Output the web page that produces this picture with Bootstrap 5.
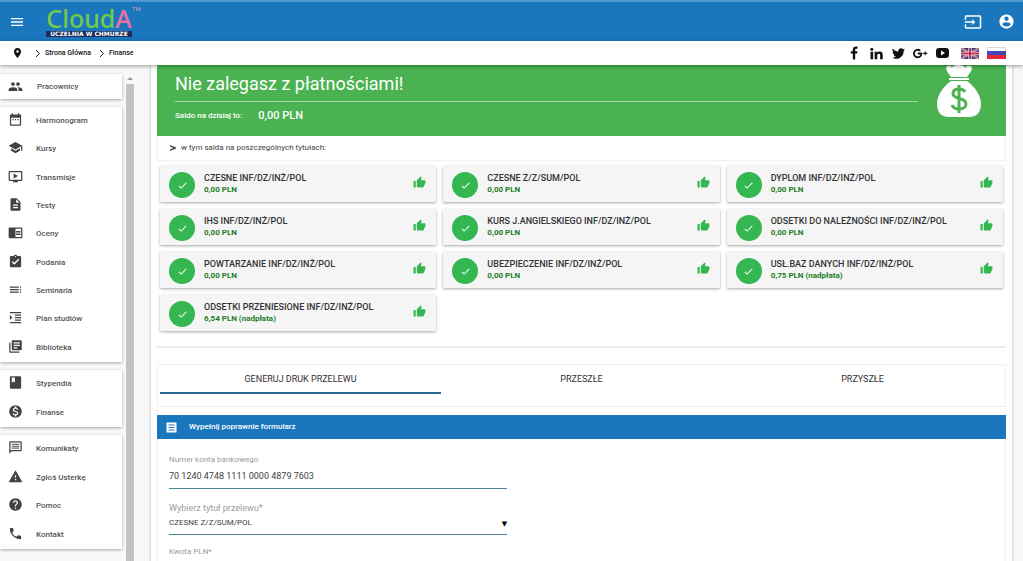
<!DOCTYPE html>
<html lang="pl">
<head>
<meta charset="utf-8">
<meta name="viewport" content="width=device-width, initial-scale=1">
<title>CloudA – Finanse</title>
<link href="https://cdn.jsdelivr.net/npm/bootstrap@5.3.0/dist/css/bootstrap.min.css" rel="stylesheet">
<style>
  :root { --brand: #1a77bd; --ok: #34b750; --banner: #4ab251; --ink: #424242; }
  body { font-family: Roboto, "Liberation Sans", sans-serif; font-size: 8px; line-height: 12px; color: var(--ink); background: #f8f8f9; }
  a { color: inherit; text-decoration: none; }
  svg { display: block; fill: currentColor; flex: none; }
  .shell { height: 100vh; overflow: hidden; }
  .topbar { background: var(--brand); border-top: 2px solid #4f9ad2; height: 41px; padding: 0 8px 0 9px; color: #fff; }
  .plain-btn { background: none; border: 0; padding: 0; color: inherit; }
  .logo { width: 86px; margin-left: 21px; }
  .logo-name { font: 500 25px/25px "Noto Sans", sans-serif; color: #72c94c; }
  .logo-name b { font-weight: 500; color: #ee6fa5; }
  .logo-tm { font-size: 6px; line-height: 6px; color: #d59bc8; top: 0; left: 86px; }
  .logo-tag { font: bold 6px/6px "DejaVu Sans", sans-serif; background: #1d2c5a; color: #fff; }
  .subbar { background: #fff; height: 24px; padding: 0 17px 0 12px; box-shadow: 0 1px 4px rgba(0,0,0,.4); z-index: 2; color: #111; }
  .crumbs { font-size: 7px; font-weight: 500; }
  .side { width: 122px; padding-top: 9px; gap: 8px; }
  .sheet { background: #fff; box-shadow: 0 1px 3px rgba(0,0,0,.32); }
  .menu { list-style: none; margin: 0; padding: 0; font-weight: 500; }
  .menu li { flex: 1 1 0; display: flex; }
  .menu a { display: flex; align-items: center; flex: 1; padding-left: 8px; gap: 13px; color: #555; }
  .menu svg { width: 15px; height: 15px; margin-bottom: 3px; color: #424242; }
  .menu-staff { min-height: 25px; } .menu-staff svg { margin-bottom: 1px; } .menu-staff a { gap: 14px; }
  .menu-study { min-height: 255px; }
  .menu-money { min-height: 57px; }
  .menu-help { min-height: 114px; }
  .track { width: 8px; margin: 12px 17px 0 4px; }
  .track-arrow { border: 3px solid transparent; border-bottom-color: #999; border-top: 0; height: 3px; width: 6px; margin: 0 1px 4px; }
  .track-thumb { background: #c4c2c5; }
  .panel { background: #fff; box-shadow: 0 0 3px rgba(0,0,0,.28); margin-right: 11px; padding: 0 6px; }
  .banner { background: var(--banner); color: #fff; height: 71px; padding: 0 24px 0 18px; gap: 18px; }
  .banner h1 { font-size: 18px; line-height: 24px; font-weight: 400; margin: 7px 0 5px; }
  .banner-rule { border-top: 1px solid #a4d8a8; padding-top: 8px; font-weight: 500; }
  .banner-sum { font-size: 11px; }
  .details { border: 1px solid #f1f1f1; border-top: 0; height: 25px; padding-left: 12px; gap: 5px; }
  .balances { display: grid; grid-template-columns: repeat(3, 1fr); gap: 7px; margin: 5px 3px 15px; }
  .balance { background: #f5f5f5; box-shadow: 0 1px 3px rgba(0,0,0,.35); height: 36px; padding: 0 10px 0 9px; gap: 9px; border-radius: 1px; }
  .tick { width: 26px; height: 26px; border-radius: 50%; background: var(--ok); color: #fff; margin-top: 2px; }
  .balance h2 { font-size: 9px; line-height: 12px; font-weight: 500; margin: 0; color: #333; }
  .balance p { font-size: 8px; line-height: 12px; font-weight: 700; margin: 0; color: #1b7d28; }
  .thumb { color: var(--ok); margin-bottom: 4px; }
  .divider { height: 2px; background: #ececec; }
  .tabs-sheet { margin-top: 16px; border: 1px solid #f1f1f1; border-width: 1px 1px 0; flex: 1; }
  .tabbar { padding: 0 2px; border-bottom: 1px solid #ececec; height: 42px; }
  .tabbar button { flex: 1 1 0; height: 29px; border-bottom: 2px solid transparent; font-size: 9px; color: #333; }
  .tabbar button.active { border-color: #286a94; }
  .form-title { background: var(--brand); color: #fff; font-size: 8px; font-weight: 500; height: 24px; margin: 8px -1px 0; padding-left: 9px; gap: 12px; line-height: 12px; }
  .pay-form { padding: 15px 11px 0; }
  .field { width: 41%; border-bottom: 1px solid #4c8196; }
  .field label, .amount label { color: #9b9b9b; display: block; font-size: 8px; }
  .field input, .field select { appearance: none; background: none; border: 0; outline: 0; padding: 0; width: 100%; color: var(--ink); display: block; height: 12px; line-height: 12px; }
  .account { height: 35px; } .account input { font-size: 9px; margin-top: 4px; }
  .title-field { height: 33px; margin-top: 13px; } .title-field label { font-size: 9px; }
  .title-field select { font-size: 8px; margin-top: 3px; }
  .title-field .caret { right: 0; bottom: 4px; font: 7px/12px "DejaVu Sans", sans-serif; color: #000; pointer-events: none; }
  .amount { margin-top: 11px; }
</style>
</head>
<body>
<svg class="d-none" aria-hidden="true">
  <symbol id="thumb" viewBox="0 0 24 24"><path d="M1 21h4V9H1v12zm22-11c0-1.100-.9-2-2-2h-6.310l.95-4.570.03-.32c0-.41-.17-.79-.44-1.060L14.170 1 7.590 7.590C7.220 7.950 7 8.450 7 9v10c0 1.100.9 2 2 2h9c.83 0 1.540-.5 1.840-1.220l3.020-7.050c.09-.23.14-.47.14-.73v-2z"/></symbol>
  <symbol id="check" viewBox="0 0 24 24"><path d="M9 16.200L4.800 12l-1.400 1.400L9 19 21 7l-1.400-1.400z"/></symbol>
  <symbol id="chev" viewBox="0 0 8 12"><path d="M1.500 1.500L6 6l-4.500 4.500" fill="none" stroke="currentColor" stroke-width="1.300"/></symbol>
</svg>
<div class="shell d-flex flex-column">
  <header class="topbar d-flex align-items-center flex-shrink-0">
    <button class="plain-btn" aria-label="Menu"><svg width="16" height="16" viewBox="0 0 24 24"><path d="M3 18h18v-2H3v2zm0-5h18v-2H3v2zm0-7v2h18V6H3z"/></svg></button>
    <a href="#" class="logo position-relative">
      <div class="logo-name text-center">Cloud<b>A</b></div>
      <span class="logo-tm position-absolute">TM</span>
      <div class="logo-tag text-center text-nowrap">UCZELNIA W CHMURZE</div>
    </a>
    <button class="plain-btn ms-auto me-3" aria-label="Wyloguj"><svg width="18" height="18" viewBox="0 0 24 24"><path d="M21 3.010H3c-1.100 0-2 .9-2 2V9h2V4.990h18v14.030H3V15H1v4.010c0 1.100.9 1.980 2 1.980h18c1.100 0 2-.88 2-1.980v-14c0-1.110-.9-2-2-2zM11 16l4-4-4-4v3H1v2h10v3z"/></svg></button>
    <button class="plain-btn" aria-label="Konto"><svg width="17" height="17" viewBox="0 0 24 24"><path d="M12 2C6.480 2 2 6.480 2 12s4.480 10 10 10 10-4.480 10-10S17.520 2 12 2zm0 3c1.660 0 3 1.340 3 3s-1.340 3-3 3-3-1.340-3-3 1.340-3 3-3zm0 14.200c-2.500 0-4.710-1.280-6-3.220.03-1.990 4-3.080 6-3.080 1.990 0 5.970 1.090 6 3.080-1.290 1.940-3.500 3.220-6 3.220z"/></svg></button>
  </header>
  <div class="subbar d-flex align-items-center position-relative flex-shrink-0">
    <svg width="11" height="10" viewBox="0 0 24 24"><path d="M12 0C7 0 3.500 3.800 3.500 8.500 3.500 15 12 24 12 24s8.500-9 8.500-15.500C20.500 3.800 17 0 12 0zm0 11.500a3 3 0 1 1 0-6 3 3 0 0 1 0 6z"/></svg>
    <nav class="crumbs d-flex align-items-center ms-2" aria-label="Ścieżka">
      <svg class="mx-1" width="6" height="9"><use href="#chev"/></svg>
      <a href="#" class="me-1">Strona Główna</a>
      <svg class="mx-1" width="6" height="9"><use href="#chev"/></svg>
      <a href="#">Finanse</a>
    </nav>
    <div class="d-flex align-items-center ms-auto gap-2">
      <a href="#" aria-label="Facebook"><svg width="14" height="14" viewBox="0 0 24 24"><path d="M10 23V13H6.500V9H10V6.200C10 2.700 12 1 15.200 1c1.400 0 2.300.1 2.800.2v3.700h-2c-1.600 0-2 .8-2 1.900V9h4l-.6 4H14v10z"/></svg></a>
      <a href="#" aria-label="LinkedIn"><svg width="15" height="15" viewBox="0 0 24 24"><circle cx="4.500" cy="5" r="2.400"/><path d="M2.400 9h4.200v12H2.400zM9 9h4v1.700c.6-1.100 2-2 4-2 4.200 0 5 2.600 5 6.200V21h-4.200v-5.500c0-1.400 0-3.100-2.100-3.100s-2.500 1.500-2.500 3V21H9z"/></svg></a>
      <a href="#" aria-label="Twitter"><svg width="13" height="13" viewBox="0 0 24 24"><path d="M23.950 4.570a10 10 0 0 1-2.820.77 4.960 4.960 0 0 0 2.160-2.720 9.900 9.900 0 0 1-3.120 1.180 4.920 4.920 0 0 0-8.380 4.480C7.690 8.100 4.070 6.130 1.640 3.160a4.920 4.920 0 0 0 1.520 6.570 4.900 4.900 0 0 1-2.230-.61v.06a4.920 4.920 0 0 0 3.950 4.830 5 5 0 0 1-2.210.08 4.940 4.940 0 0 0 4.600 3.420A9.870 9.870 0 0 1 0 19.540a13.990 13.990 0 0 0 7.550 2.210c9.050 0 14-7.500 14-13.980 0-.21 0-.42-.02-.63a9.940 9.940 0 0 0 2.420-2.570z"/></svg></a>
      <a href="#" aria-label="Google+"><svg width="15" height="11" viewBox="0 0 32 24"><path d="M10 10v4h5.800c-.5 2.400-2.700 4.200-5.800 4.200a6.200 6.200 0 1 1 4-10.900l3-2.900A10.300 10.300 0 1 0 10 22.300c6 0 10-4.200 10-10.100 0-.8 0-1.500-.2-2.200zM25 7.500v3h-3V13h3v3h2.600v-3H31v-2.500h-3.400v-3z"/></svg></a>
      <a href="#" class="me-1" aria-label="YouTube"><svg width="13" height="12" viewBox="0 0 26 24"><path fill-rule="evenodd" d="M6 2h14c4 0 6 2 6 6v8c0 4-2 6-6 6H6c-4 0-6-2-6-6V8c0-4 2-6 6-6zm4 5v10l8-5z"/></svg></a>
      <a href="#" aria-label="English"><svg width="18" height="11" viewBox="0 0 38 22" preserveAspectRatio="none"><path fill="#32407f" d="M0 0h38v22H0z"/><path d="M0 0l38 22M38 0L0 22" stroke="#e8d8e4" stroke-width="4"/><path d="M0 0l38 22M38 0L0 22" stroke="#c23050" stroke-width="2"/><path d="M19 0v22M0 11h38" stroke="#f0e4ec" stroke-width="7"/><path d="M19 0v22M0 11h38" stroke="#c8304e" stroke-width="4"/></svg></a>
      <a href="#" aria-label="Русский"><svg width="19" height="12" viewBox="0 0 19 12"><path fill="#ddd" d="M0 0h19v12H0z"/><path fill="#fff" d="M1 1h17v4H1z"/><path fill="#4545b5" d="M0 4h19v4H0z"/><path fill="#e32636" d="M0 8h19v4H0z"/></svg></a>
    </div>
  </div>
  <div class="d-flex flex-grow-1">
    <aside class="side d-flex flex-column flex-shrink-0">
      <ul class="menu menu-staff sheet d-flex flex-column">
        <li><a href="#"><svg viewBox="0 0 24 24"><path d="M16 11c1.660 0 2.990-1.340 2.990-3S17.660 5 16 5c-1.660 0-3 1.340-3 3s1.340 3 3 3zm-8 0c1.660 0 2.990-1.340 2.990-3S9.660 5 8 5C6.340 5 5 6.340 5 8s1.340 3 3 3zm0 2c-2.330 0-7 1.170-7 3.500V19h14v-2.500c0-2.330-4.670-3.500-7-3.500zm8 0c-.29 0-.62.02-.97.05 1.160.84 1.970 1.970 1.970 3.450V19h6v-2.500c0-2.330-4.670-3.500-7-3.500z"/></svg>Pracownicy</a></li>
      </ul>
      <ul class="menu menu-study sheet d-flex flex-column">
        <li><a href="#"><svg viewBox="0 0 24 24"><path d="M9 11H7v2h2v-2zm4 0h-2v2h2v-2zm4 0h-2v2h2v-2zm2-7h-1V2h-2v2H8V2H6v2H5c-1.110 0-1.990.9-1.990 2L3 20c0 1.100.89 2 2 2h14c1.100 0 2-.9 2-2V6c0-1.100-.9-2-2-2zm0 16H5V9h14v11z"/></svg>Harmonogram</a></li>
        <li><a href="#"><svg viewBox="0 0 24 24"><path d="M5 13.180v4L12 21l7-3.820v-4L12 17l-7-3.820zM12 3L1 9l11 6 9-4.910V17h2V9L12 3z"/></svg>Kursy</a></li>
        <li><a href="#"><svg viewBox="0 0 24 24"><path d="M21 3H3c-1.110 0-2 .89-2 2v12c0 1.100.89 2 2 2h5v2h8v-2h5c1.100 0 1.990-.9 1.990-2L23 5c0-1.110-.9-2-2-2zm0 14H3V5h18v12zm-5-6l-7 4V7z"/></svg>Transmisje</a></li>
        <li><a href="#"><svg viewBox="0 0 24 24"><path d="M14 2H6c-1.100 0-1.990.9-1.990 2L4 20c0 1.100.89 2 1.990 2H18c1.100 0 2-.9 2-2V8l-6-6zm2 16H8v-2h8v2zm0-4H8v-2h8v2zm-3-5V3.500L18.500 9H13z"/></svg>Testy</a></li>
        <li><a href="#"><svg viewBox="0 0 24 24"><path d="M13 12h7v1.500h-7zm0-2.500h7V11h-7zm0 5h7V16h-7zM21 4H3c-1.100 0-2 .9-2 2v13c0 1.100.9 2 2 2h18c1.100 0 2-.9 2-2V6c0-1.100-.9-2-2-2zm0 15h-9V6h9v13z"/></svg>Oceny</a></li>
        <li><a href="#"><svg viewBox="0 0 24 24"><path d="M19 3h-4.180C14.400 1.840 13.300 1 12 1c-1.300 0-2.400.84-2.820 2H5c-1.100 0-2 .9-2 2v14c0 1.100.9 2 2 2h14c1.100 0 2-.9 2-2V5c0-1.100-.9-2-2-2zm-7 0c.55 0 1 .45 1 1s-.45 1-1 1-1-.45-1-1 .45-1 1-1zm-2 14l-4-4 1.410-1.410L10 14.170l6.590-6.590L18 9l-8 8z"/></svg>Podania</a></li>
        <li><a href="#"><svg viewBox="0 0 24 24"><path d="M3 9h14V7H3v2zm0 4h14v-2H3v2zm0 4h14v-2H3v2zm16 0h2v-2h-2v2zm0-10v2h2V7h-2zm0 6h2v-2h-2v2z"/></svg>Seminaria</a></li>
        <li><a href="#"><svg viewBox="0 0 24 24"><path d="M3 21h18v-2H3v2zM3 8v8l4-4-4-4zm8 9h10v-2H11v2zM3 3v2h18V3H3zm8 6h10V7H11v2zm0 4h10v-2H11v2z"/></svg>Plan studiów</a></li>
        <li><a href="#"><svg viewBox="0 0 24 24"><path d="M4 6H2v14c0 1.100.9 2 2 2h14v-2H4V6zm16-4H8c-1.100 0-2 .9-2 2v12c0 1.100.9 2 2 2h12c1.100 0 2-.9 2-2V4c0-1.100-.9-2-2-2zm-1 9H9V9h10v2zm-4 4H9v-2h6v2zm4-8H9V5h10v2z"/></svg>Biblioteka</a></li>
      </ul>
      <ul class="menu menu-money sheet d-flex flex-column">
        <li><a href="#"><svg viewBox="0 0 24 24"><path d="M19 2H5c-1.100 0-2 .9-2 2v16c0 1.100.9 2 2 2h14c1.100 0 2-.9 2-2V4c0-1.100-.9-2-2-2zM6 4h5v8l-2.500-1.500L6 12V4z"/></svg>Stypendia</a></li>
        <li><a href="#"><svg viewBox="0 0 24 24"><path d="M12 2C6.480 2 2 6.480 2 12s4.480 10 10 10 10-4.480 10-10S17.520 2 12 2zm1.410 16.090V20h-2.670v-1.930c-1.710-.36-3.160-1.460-3.270-3.400h1.960c.1 1.050.82 1.870 2.650 1.870 1.960 0 2.400-.98 2.400-1.590 0-.83-.44-1.610-2.670-2.140-2.480-.6-4.180-1.620-4.180-3.670 0-1.720 1.390-2.840 3.110-3.210V4h2.670v1.950c1.860.45 2.790 1.860 2.850 3.390H14.300c-.05-1.110-.64-1.870-2.220-1.870-1.500 0-2.400.68-2.400 1.640 0 .84.65 1.390 2.670 1.910s4.180 1.390 4.180 3.910c-.01 1.830-1.380 2.830-3.120 3.160z"/></svg>Finanse</a></li>
      </ul>
      <ul class="menu menu-help sheet d-flex flex-column">
        <li><a href="#"><svg viewBox="0 0 24 24"><path d="M20 2H4c-1.100 0-2 .9-2 2v18l4-4h14c1.100 0 2-.9 2-2V4c0-1.100-.9-2-2-2zm0 14H5l-1 1V4h16z"/><path d="M6 12h12v2H6zm0-3h12v2H6zm0-3h12v2H6z" opacity=".75"/></svg>Komunikaty</a></li>
        <li><a href="#"><svg viewBox="0 0 24 24"><path d="M1 21h22L12 2 1 21zm12-3h-2v-2h2v2zm0-4h-2v-4h2v4z"/></svg>Zgłoś Usterkę</a></li>
        <li><a href="#"><svg viewBox="0 0 24 24"><path d="M12 2C6.480 2 2 6.480 2 12s4.480 10 10 10 10-4.480 10-10S17.520 2 12 2zm1 17h-2v-2h2v2zm2.070-7.750l-.9.920C13.450 12.900 13 13.500 13 15h-2v-.5c0-1.100.45-2.100 1.170-2.830l1.240-1.260c.37-.36.59-.86.59-1.410 0-1.100-.9-2-2-2s-2 .9-2 2H8c0-2.210 1.790-4 4-4s4 1.790 4 4c0 .88-.36 1.680-.93 2.250z"/></svg>Pomoc</a></li>
        <li><a href="#"><svg viewBox="0 0 24 24"><path d="M6.620 10.790c1.440 2.830 3.760 5.140 6.590 6.590l2.200-2.200c.27-.27.67-.36 1.020-.24 1.120.37 2.330.57 3.570.57.55 0 1 .45 1 1V20c0 .55-.45 1-1 1-9.390 0-17-7.610-17-17 0-.55.45-1 1-1h3.500c.55 0 1 .45 1 1 0 1.250.2 2.450.57 3.570.11.35.03.74-.25 1.020l-2.200 2.200z"/></svg>Kontakt</a></li>
      </ul>
    </aside>
    <div class="track d-flex flex-column flex-shrink-0" aria-hidden="true"><div class="track-arrow"></div><div class="track-thumb flex-grow-1"></div></div>
    <main class="panel d-flex flex-column flex-grow-1">
      <section class="banner d-flex">
        <div class="flex-grow-1">
          <h1>Nie zalegasz z płatnościami!</h1>
          <div class="banner-rule d-flex align-items-center gap-3"><span>Saldo na dzisiaj to:</span><span class="banner-sum">0,00 PLN</span></div>
        </div>
        <svg width="46" height="53" viewBox="0 0 46 53" fill="#fff"><path d="M10 3c1-3 5-3 6 0 0-4 13-4 13 0 2-3 6-3 7 0 0 3-3 6-5 9H15c-2-3-5-6-5-9zM13 13h20v2H13zM15 16h16c7 5 14 14 14 23 0 9-5 13-12 13H13C6 52 1 48 1 39c0-9 7-18 14-23z"/><path d="M29 27c-1-2-3-3-6-3-4 0-6 2-6 4.500 0 6.500 13 3.500 13 10.500 0 3-3 5-7 5-3.500 0-6-1.500-7-4M23 20v28" fill="none" stroke="#4ab251" stroke-width="3"/></svg>
      </section>
      <div class="details d-flex align-items-center"><svg width="6" height="6" viewBox="0 0 12 12"><path d="M0 0l12 5v2L0 12V9l7-3-7-3z"/></svg><span>w tym salda na poszczególnych tytułach:</span></div>
      <section class="balances">
        <article class="balance d-flex align-items-center"><span class="tick d-flex align-items-center justify-content-center"><svg width="11" height="11"><use href="#check"/></svg></span><div class="flex-grow-1"><h2>CZESNE INF/DZ/INŻ/POL</h2><p>0,00 PLN</p></div><svg class="thumb" width="13" height="13"><use href="#thumb"/></svg></article>
        <article class="balance d-flex align-items-center"><span class="tick d-flex align-items-center justify-content-center"><svg width="11" height="11"><use href="#check"/></svg></span><div class="flex-grow-1"><h2>CZESNE Z/Z/SUM/POL</h2><p>0,00 PLN</p></div><svg class="thumb" width="13" height="13"><use href="#thumb"/></svg></article>
        <article class="balance d-flex align-items-center"><span class="tick d-flex align-items-center justify-content-center"><svg width="11" height="11"><use href="#check"/></svg></span><div class="flex-grow-1"><h2>DYPLOM INF/DZ/INŻ/POL</h2><p>0,00 PLN</p></div><svg class="thumb" width="13" height="13"><use href="#thumb"/></svg></article>
        <article class="balance d-flex align-items-center"><span class="tick d-flex align-items-center justify-content-center"><svg width="11" height="11"><use href="#check"/></svg></span><div class="flex-grow-1"><h2>IHS INF/DZ/INŻ/POL</h2><p>0,00 PLN</p></div><svg class="thumb" width="13" height="13"><use href="#thumb"/></svg></article>
        <article class="balance d-flex align-items-center"><span class="tick d-flex align-items-center justify-content-center"><svg width="11" height="11"><use href="#check"/></svg></span><div class="flex-grow-1"><h2>KURS J.ANGIELSKIEGO INF/DZ/INŻ/POL</h2><p>0,00 PLN</p></div><svg class="thumb" width="13" height="13"><use href="#thumb"/></svg></article>
        <article class="balance d-flex align-items-center"><span class="tick d-flex align-items-center justify-content-center"><svg width="11" height="11"><use href="#check"/></svg></span><div class="flex-grow-1"><h2>ODSETKI DO NALEŻNOŚCI INF/DZ/INŻ/POL</h2><p>0,00 PLN</p></div><svg class="thumb" width="13" height="13"><use href="#thumb"/></svg></article>
        <article class="balance d-flex align-items-center"><span class="tick d-flex align-items-center justify-content-center"><svg width="11" height="11"><use href="#check"/></svg></span><div class="flex-grow-1"><h2>POWTARZANIE INF/DZ/INŻ/POL</h2><p>0,00 PLN</p></div><svg class="thumb" width="13" height="13"><use href="#thumb"/></svg></article>
        <article class="balance d-flex align-items-center"><span class="tick d-flex align-items-center justify-content-center"><svg width="11" height="11"><use href="#check"/></svg></span><div class="flex-grow-1"><h2>UBEZPIECZENIE INF/DZ/INŻ/POL</h2><p>0,00 PLN</p></div><svg class="thumb" width="13" height="13"><use href="#thumb"/></svg></article>
        <article class="balance d-flex align-items-center"><span class="tick d-flex align-items-center justify-content-center"><svg width="11" height="11"><use href="#check"/></svg></span><div class="flex-grow-1"><h2>USŁ.BAZ DANYCH INF/DZ/INŻ/POL</h2><p>0,75 PLN (nadpłata)</p></div><svg class="thumb" width="13" height="13"><use href="#thumb"/></svg></article>
        <article class="balance d-flex align-items-center"><span class="tick d-flex align-items-center justify-content-center"><svg width="11" height="11"><use href="#check"/></svg></span><div class="flex-grow-1"><h2>ODSETKI PRZENIESIONE INF/DZ/INŻ/POL</h2><p>6,54 PLN (nadpłata)</p></div><svg class="thumb" width="13" height="13"><use href="#thumb"/></svg></article>
      </section>
      <div class="divider"></div>
      <section class="tabs-sheet">
        <div class="tabbar d-flex" role="tablist">
          <button class="plain-btn active" role="tab" aria-selected="true">GENERUJ DRUK PRZELEWU</button>
          <button class="plain-btn" role="tab" aria-selected="false">PRZESZŁE</button>
          <button class="plain-btn" role="tab" aria-selected="false">PRZYSZŁE</button>
        </div>
        <h3 class="form-title d-flex align-items-center mb-0"><svg width="11" height="11" viewBox="0 0 22 22"><path fill-rule="evenodd" d="M1 1h20v20H1zm4 4v2h12V5zm0 5v2h12v-2zm0 5v2h12v-2z"/></svg>Wypełnij poprawnie formularz</h3>
        <form class="pay-form">
          <div class="field account"><label for="acc">Numer konta bankowego</label><input id="acc" type="text" value="70 1240 4748 1111 0000 4879 7603"></div>
          <div class="field title-field position-relative"><label for="ttl">Wybierz tytuł przelewu*</label><select id="ttl"><option>CZESNE Z/Z/SUM/POL</option></select><span class="caret position-absolute">▼</span></div>
          <div class="amount"><label for="amt">Kwota PLN*</label></div>
          <div class="field"><input id="amt" type="text"></div>
        </form>
      </section>
    </main>
  </div>
</div>
<script src="https://cdn.jsdelivr.net/npm/bootstrap@5.3.0/dist/js/bootstrap.bundle.min.js"></script>
</body>
</html>
